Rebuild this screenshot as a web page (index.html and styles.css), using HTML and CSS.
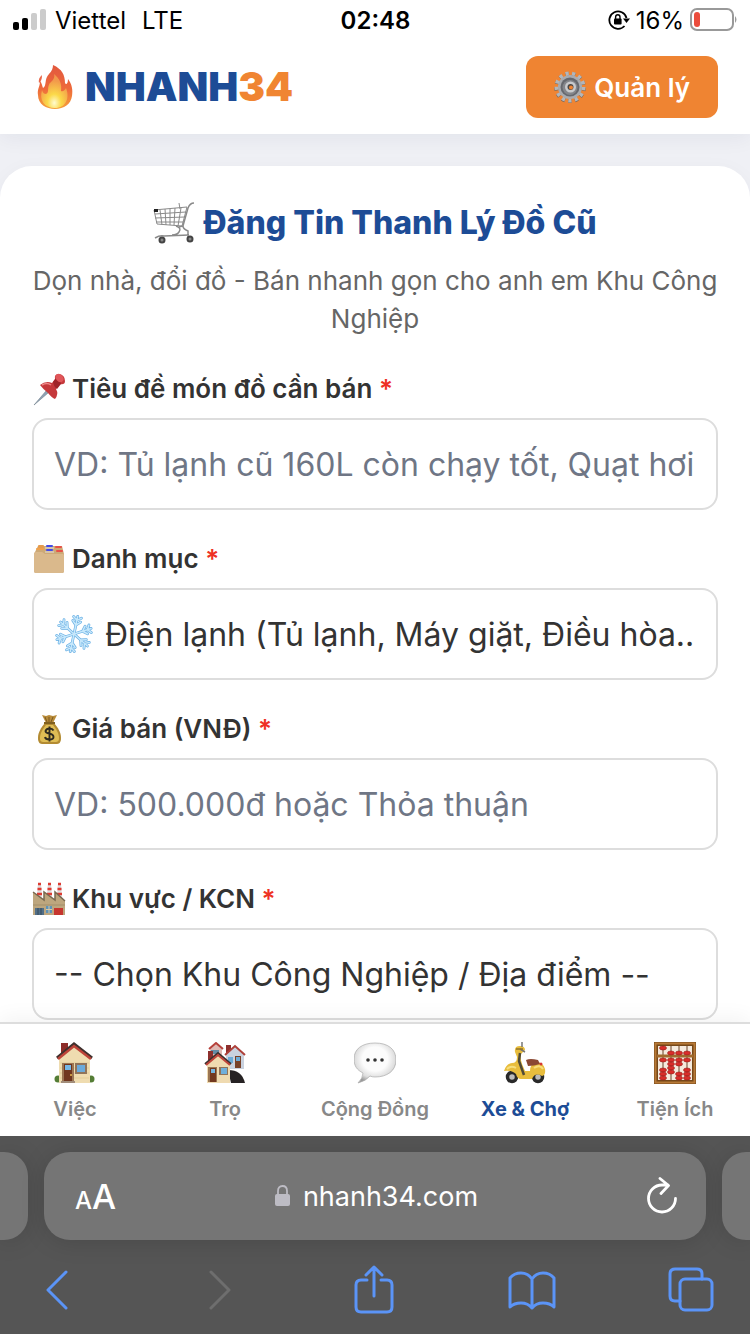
FILE: index.html
```html
<!DOCTYPE html>
<html lang="vi">
<head>
<meta charset="utf-8">
<meta name="viewport" content="width=device-width, initial-scale=1">
<title>NHANH34 - Đăng Tin Thanh Lý Đồ Cũ</title>
<link rel="stylesheet" href="styles.css">
</head>
<body>
<div class="screen">
  <div class="status">
    <div class="status-side">
      <svg width="34" height="22" viewBox="0 0 34 22" aria-hidden="true">
        <rect x="0" y="13" width="6" height="8" rx="2"/><rect x="9" y="9" width="6" height="12" rx="2"/>
        <g fill="#ccc"><rect x="18" y="4" width="6" height="17" rx="2"/><rect x="27" y="0" width="6" height="21" rx="2"/></g>
      </svg>
      <span>Viettel</span><span class="network">LTE</span>
    </div>
    <time class="clock">02:48</time>
    <div class="status-side status-right">
      <svg width="22" height="20" viewBox="0 0 22 20" aria-hidden="true">
        <path d="M18.500 8A8.700 8.700 0 1 0 16.500 16" fill="none" stroke="#000" stroke-width="1.800"/>
        <path d="M15 8.500h7l-3.500 4.500z"/><rect x="6" y="8.400" width="7.600" height="6.200" rx="1"/>
        <path d="M7.600 9V7a2.200 2.200 0 0 1 4.400 0v2" fill="none" stroke="#000" stroke-width="1.400"/>
      </svg>
      <span>16%</span>
      <svg width="48" height="24" viewBox="0 0 48 24" aria-hidden="true">
        <rect x="1" y="1" width="42" height="21" rx="6" fill="none" stroke="#999" stroke-width="2"/>
        <rect x="4" y="4" width="6" height="15" rx="3" fill="#eb4d3d"/><path d="M45 8q3 3.500 0 7z" fill="#999"/>
      </svg>
    </div>
  </div>

  <header class="header">
    <a class="brand" href="#">
      <svg width="36" height="44" viewBox="0 0 36 44" aria-hidden="true">
        <defs>
          <linearGradient id="fire" x1="0" y1="0" x2="0" y2="1"><stop offset="0" stop-color="#e2583e"/><stop offset=".55" stop-color="#ee6a3b"/><stop offset="1" stop-color="#f5a13b"/></linearGradient>
          <radialGradient id="glow" cx=".5" cy=".85" r=".65"><stop offset="0" stop-color="#fffbd0"/><stop offset=".4" stop-color="#fbd949"/><stop offset="1" stop-color="#f29a4b"/></radialGradient>
        </defs>
        <path d="M16 0C25 4 28 10 28 18c1 2 3 1 3-4 4 5 5 11 4 17-1 8-8 13-17 13S1 39 1 30c-1-6 2-8 2-14 2 2 2 5 3 7 4-2 1-9 6-14 3-3 4-6 4-9z" fill="url(#fire)"/>
        <path d="M17 9c6 5 8 10 7 17 2 1 4-1 5-3 4 10 0 20-11 20S2 35 5 25c1 3 2 4 4 4 4-1 0-8 5-12 3-3 4-5 3-8z" fill="url(#glow)"/>
        <path d="M5 10q-4 3-3 8 3-2 3-8" fill="#e9684b"/>
      </svg>
      <span class="wordmark">NHANH<span class="wordmark-accent">34</span></span>
    </a>
    <button class="manage" type="button">
      <svg width="32" height="32" viewBox="0 0 32 32" aria-hidden="true">
        <circle cx="16" cy="16.500" r="13.500" fill="none" stroke="#75675b" stroke-width="4.500" stroke-dasharray="3.200 3.325"/>
        <circle cx="16" cy="16" r="13.500" fill="none" stroke="#b4b6ba" stroke-width="4" stroke-dasharray="3.200 3.325"/>
        <circle cx="16" cy="16" r="12" fill="#a9abaf"/><circle cx="16" cy="16" r="9.500" fill="#66686e"/>
        <circle cx="16" cy="16.500" r="7.500" fill="#84868b"/><circle cx="16.500" cy="16" r="5.500" fill="#c8cacd"/>
        <circle cx="16.500" cy="16" r="3" fill="#4c4642"/><circle cx="17" cy="16.500" r="2" fill="#ef8432"/>
      </svg>
      <span>Quản lý</span>
    </button>
  </header>

  <main class="content">
    <form class="card">
      <h1 class="title">
        <svg width="42" height="42" viewBox="0 0 42 42" fill="none" stroke="#8a8a8a" stroke-width="1" aria-hidden="true">
          <path d="M1 8l33-3-5 19L4 22z"/><path d="M2 12l31-2M2 16l30-1M3 20l28 0M7 8l2 15M12 7l1 16M17 7v16M22 6l-1 17M28 6l-3 18M27 7l-1-6"/>
          <path d="M41 1q-4 0-6 5l-5 18-4 1M23 24q6 2 3 6-2 3-7 3M30 24q0 3 5 5v6M2 36q5-3 9-2l25-1" stroke-width="1.500"/>
          <rect x="1" y="7" width="4" height="3" fill="#222" stroke="none"/><g fill="#888" stroke="#444" stroke-width="2"><circle cx="9" cy="38" r="2.500"/><circle cx="37" cy="37" r="2.500"/></g>
        </svg>
        <span>Đăng Tin Thanh Lý Đồ Cũ</span>
      </h1>
      <p class="subtitle">Dọn nhà, đổi đồ - Bán nhanh gọn cho anh em Khu Công Nghiệp</p>

      <div class="field">
        <label class="label" for="item-title">
          <svg width="34" height="34" viewBox="0 0 34 34" aria-hidden="true">
            <path d="M2 33L14 19l2 2z" fill="#8fa3b5" stroke="#71808c" stroke-width=".6"/>
            <path d="M8 13q6-5 12-2l3-4q-1-5 4-5 6 1 6 7 0 4-5 3l-4 5q3 5-1 10-3-1-7-6-5-4-8-8z" fill="#c5383b"/>
            <path d="M21 10l3-4q5 1 5 6l-4 5q-3-2-4-7z" fill="#9f2429"/><ellipse cx="27.500" cy="6" rx="3.500" ry="4.500" transform="rotate(-40 27.500 6)" fill="#e0565a"/><path d="M10 13q5-3 9 0" fill="none" stroke="#e88" stroke-width="1.500"/>
          </svg>
          <span>Tiêu đề món đồ cần bán <span class="required">*</span></span>
        </label>
        <input class="control" id="item-title" type="text" placeholder="VD: Tủ lạnh cũ 160L còn chạy tốt, Quạt hơi">
      </div>

      <div class="field">
        <label class="label" for="category">
          <svg width="34" height="34" viewBox="0 0 34 34" aria-hidden="true">
            <path d="M2 12l4-8h24l2 8v17q0 2-2 2H4q-2 0-2-2z" fill="#cda976"/>
            <rect x="6" y="3" width="6" height="3" rx="1" fill="#e49a4d"/><rect x="4" y="6" width="8" height="2" rx="1" fill="#f0a04a"/>
            <path d="M13 6h9M13 10h9" stroke="#ddd"/><rect x="14" y="3" width="7" height="2" rx="1" fill="#424bea"/><rect x="14" y="7" width="7" height="2" rx="1" fill="#424bea"/>
            <rect x="23" y="4" width="7" height="2" rx="1" fill="#e85148"/><rect x="24" y="8" width="7" height="2" rx="1" fill="#e85148"/>
            <path d="M2 12q0-2 2-2h6l3 2h18q1 0 1 1v16q0 2-2 2H4q-2 0-2-2z" fill="#dab98c"/>
          </svg>
          <span>Danh mục <span class="required">*</span></span>
        </label>
        <div class="select-box">
          <svg class="select-icon" width="40" height="40" viewBox="-20 -20 40 40" fill="none" stroke-linecap="round" aria-hidden="true">
            <defs><g id="arm"><path d="M0 0V-18M0-9l-4-4M0-9l4-4M0-14l-4-3M0-14l4-3"/></g>
            <g id="flake"><use href="#arm"/><use href="#arm" transform="rotate(60)"/><use href="#arm" transform="rotate(120)"/><use href="#arm" transform="rotate(180)"/><use href="#arm" transform="rotate(240)"/><use href="#arm" transform="rotate(300)"/></g></defs>
            <g transform="rotate(12)"><use href="#flake" stroke="#68afe4" stroke-width="2.800"/><use href="#flake" stroke="#c7e8fb" stroke-width="1.500"/></g>
          </svg>
          <select class="control control-with-icon" id="category"><option>Điện lạnh (Tủ lạnh, Máy giặt, Điều hòa..</option></select>
        </div>
      </div>

      <div class="field">
        <label class="label" for="price">
          <svg width="34" height="34" viewBox="0 0 34 34" aria-hidden="true">
            <path d="M10 3l4 1 3-1 4 1 4-1-4 8h-7z" fill="#b88b39"/><path d="M13 5l2 5M17 5v5M21 5l-2 5" stroke="#7b5921"/>
            <path d="M13 11h9c4 5 7 9 7 15 0 5-2 6-5 6H11c-3 0-5-1-5-6 0-6 3-10 7-15z" fill="#b38b32"/><path d="M14 13h7c3 4 6 8 6 13 0 3-1 4-4 4H12c-3 0-4-1-4-4 0-5 3-9 6-13z" fill="#dfbd55"/>
            <path d="M12 11h11" stroke="#806020" stroke-width="2"/><path d="M21.500 18.500q-1-2-4-2t-4 2.500q0 2 4 2.700t4 3.300q0 2.500-4 2.500t-4.500-2.500M17.500 14.500v15" fill="none" stroke="#2f2b20" stroke-width="1.900"/>
          </svg>
          <span>Giá bán (VNĐ) <span class="required">*</span></span>
        </label>
        <input class="control" id="price" type="text" placeholder="VD: 500.000đ hoặc Thỏa thuận">
      </div>

      <div class="field">
        <label class="label" for="area">
          <svg width="34" height="34" viewBox="0 0 34 34" aria-hidden="true">
            <path d="M5 14l1-13h3l1 16M15 14l1-13h3l1 16M25 14l1-13h3l1 16" fill="#dedcdc"/><path d="M6 2h3M5.500 7h4M5 12h5M16 2h3M15.500 7h4M15 12h5M26 2h3M25.500 7h4M25 12h5" stroke="#dd3b32" stroke-width="2.500"/>
            <path d="M1 10l11 8v-8l11 8v-8l10 9v14H1z" fill="#bda67e"/><path d="M1 10l11 8v-8l11 8v-8l10 9" fill="none" stroke="#776850" stroke-width="1.500"/><path d="M1 23h32" stroke="#a28f6b"/>
            <path d="M3 26h9v7H3z" fill="#526f87"/><path d="M6 26v7M9 26v7" stroke="#344b5d"/><path d="M14 24h6v7h-6z" fill="#5f93b8"/><path d="M17 24v7M14 27.500h6" stroke="#d8c9a9"/><path d="M22 26h9v7h-9z" fill="#c6352e"/>
          </svg>
          <span>Khu vực / KCN <span class="required">*</span></span>
        </label>
        <select class="control" id="area"><option>-- Chọn Khu Công Nghiệp / Địa điểm --</option></select>
      </div>
    </form>
  </main>

  <nav class="tabs">
    <a class="tab" href="#">
      <svg width="42" height="42" viewBox="0 0 42 42" aria-hidden="true">
        <g fill="#547d35"><circle cx="4" cy="37" r="3.500"/><circle cx="37" cy="37" r="3.500"/></g>
        <path d="M7 1h7v11H7z" fill="#8e2d29"/><path d="M5 17L20 4l16 13v24H5z" fill="#efdcb0"/><path d="M6 21h29M6 26h29M6 31h29M6 36h29" stroke="#dfc794" stroke-width=".7"/>
        <path d="M3 16L20 2l18 14" fill="none" stroke="#3f302d" stroke-width="3"/><path d="M4 17L20 4l17 13" fill="none" stroke="#be4439" stroke-width="2.500"/>
        <path d="M8 21h12v19H8z" fill="#9c7654"/><path d="M10 22h8v18h-8z" fill="#70361f"/><path d="M11 23h6v5h-6z" fill="#76b7e6"/><circle cx="17" cy="33" r="1" fill="#e4b84f"/><path d="M7 39h14v2H7z" fill="#a28d7a"/>
        <path d="M21 21h12v11H21z" fill="#90745b"/><path d="M23 23h8v7h-8z" fill="#6caada"/>
      </svg><span>Việc</span>
    </a>
    <a class="tab" href="#">
      <svg width="42" height="42" viewBox="0 0 42 42" aria-hidden="true">
        <path d="M6 7l6-5 6 5v9H6z" fill="#dfb9b4"/><path d="M5 7l7-6 7 6" fill="none" stroke="#b6413b" stroke-width="2"/><path d="M7 8h8v4H7z" fill="#648ca6"/>
        <path d="M22 3h5v8h-5z" fill="#8e302d"/><path d="M22 13l9-9 9 9v14H22z" fill="#c9d2df"/><path d="M21 13l10-9 10 9" fill="none" stroke="#ae4039" stroke-width="2"/><path d="M31 14h6v12h-6z" fill="#784127"/><path d="M32 15h4v4h-4zM24 15h5v6h-5z" fill="#6cabd7"/>
        <path d="M24 28q14 0 17 13H27z" fill="#262223"/><path d="M4 9h5v9H4z" fill="#8e302d"/><path d="M3 21l12-9 11 9v20H3z" fill="#efdab0"/><path d="M1 22L14 11l13 11" fill="none" stroke="#3d302e" stroke-width="2"/><path d="M2 23l12-10 12 10" fill="none" stroke="#c0443a" stroke-width="2"/>
        <path d="M4 25h9v15H4z" fill="#9b7653"/><path d="M6 26h6v14H6z" fill="#72381f"/><path d="M7 27h4v4H7z" fill="#75b6e1"/><path d="M15 25h9v8h-9z" fill="#90745b"/><path d="M17 26h6v6h-6z" fill="#70afdb"/>
      </svg><span>Trọ</span>
    </a>
    <a class="tab" href="#">
      <svg width="42" height="42" viewBox="0 0 42 42" aria-hidden="true">
        <defs><radialGradient id="bubble" cx=".5" cy=".4" r=".6"><stop offset=".5" stop-color="#fcfcfc"/><stop offset=".8" stop-color="#ddd"/><stop offset="1" stop-color="#999"/></radialGradient></defs>
        <path d="M9 31C3 28 0 24 0 17 0 7 8 1 21 1s21 6 21 17-9 17-21 17q-3 0-5-1-4 5-12 7 5-5 5-10z" fill="url(#bubble)" stroke="#aaa" stroke-width=".7"/>
        <g fill="#333"><circle cx="14" cy="18" r="1.800"/><circle cx="21" cy="18" r="1.800"/><circle cx="28" cy="18" r="1.800"/></g>
      </svg><span>Cộng Đồng</span>
    </a>
    <a class="tab tab-active" href="#" aria-current="page">
      <svg width="42" height="42" viewBox="0 0 42 42" aria-hidden="true">
        <g fill="#bbb" stroke="#292929" stroke-width="3.500"><circle cx="8" cy="35" r="4.500"/><circle cx="34" cy="35" r="4.500"/></g>
        <path d="M11 10q-1-6 5-6 5 0 5 4l-4 4q-1 4 1 10l3 7h5q0-7 6-9 7 0 9 7 1 6-3 7-7-4-10 3H17q-4 0-5-5-4-4-12-3 2-7 8-8 5 0 5-6z" fill="#e8bd3d"/>
        <path d="M16 11l-1 8 5 14" fill="none" stroke="#514b37" stroke-width="2.500"/><path d="M18 5V0M16 7l5 3" stroke="#777" stroke-width="1.500"/><path d="M12 7h7" stroke="#92742b" stroke-width="1.500"/>
        <path d="M22 18q4-2 12 0l2 4q-6 2-12 2z" fill="#8b4933"/><circle cx="37" cy="22" r="1.500" fill="#d63832"/><path d="M3 27q4-4 9-1M30 26q6-4 9 1" fill="none" stroke="#f7df7d" stroke-width="2"/>
      </svg><span>Xe &amp; Chợ</span>
    </a>
    <a class="tab" href="#">
      <svg width="42" height="42" viewBox="0 0 42 42" aria-hidden="true">
        <rect x="2" y="2" width="38" height="38" fill="#f5eadd" stroke="#754819" stroke-width="4"/><rect x="1.500" y="1.500" width="39" height="39" fill="none" stroke="#b77937" stroke-width="2"/>
        <path d="M9 4v34M17 4v34M25 4v34M33 4v34" stroke="#6b4429"/><path d="M3 14h36" stroke="#a26a2d" stroke-width="3"/>
        <g fill="#d92d29" stroke="#93201d" stroke-width=".6"><ellipse cx="9" cy="6" rx="3.500" ry="2"/><ellipse cx="17" cy="11" rx="3.500" ry="2"/><ellipse cx="25" cy="11" rx="3.500" ry="2"/><ellipse cx="33" cy="11" rx="3.500" ry="2"/>
        <ellipse cx="9" cy="18" rx="3.500" ry="2"/><ellipse cx="17" cy="18" rx="3.500" ry="2"/><ellipse cx="25" cy="18" rx="3.500" ry="2"/><ellipse cx="33" cy="18" rx="3.500" ry="2"/>
        <ellipse cx="17" cy="22" rx="3.500" ry="2"/><ellipse cx="25" cy="22" rx="3.500" ry="2"/><ellipse cx="17" cy="26" rx="3.500" ry="2"/><ellipse cx="9" cy="28" rx="3.500" ry="2"/><ellipse cx="33" cy="28" rx="3.500" ry="2"/>
        <ellipse cx="17" cy="30" rx="3.500" ry="2"/><ellipse cx="9" cy="32" rx="3.500" ry="2"/><ellipse cx="25" cy="32" rx="3.500" ry="2"/><ellipse cx="33" cy="32" rx="3.500" ry="2"/><ellipse cx="9" cy="36" rx="3.500" ry="2"/><ellipse cx="25" cy="36" rx="3.500" ry="2"/><ellipse cx="33" cy="36" rx="3.500" ry="2"/></g>
      </svg><span>Tiện Ích</span>
    </a>
  </nav>

  <footer class="browser">
    <div class="address-row">
      <div class="peek peek-left"></div>
      <div class="address">
        <button class="address-button text-size" type="button" aria-label="Cỡ chữ"><span class="small-a">A</span><span>A</span></button>
        <div class="site">
          <svg width="16" height="22" viewBox="0 0 16 22" aria-hidden="true"><rect x="0" y="9" width="15" height="12" rx="2" fill="#bdbcc4"/><path d="M3 10V6q0-5 4.500-5T12 6v4" fill="none" stroke="#bdbcc4" stroke-width="1.800"/></svg>
          <span>nhanh34.com</span>
        </div>
        <button class="address-button reload" type="button" aria-label="Tải lại">
          <svg width="32" height="38" viewBox="0 0 32 38" fill="none" stroke="#fff" stroke-width="2.800" stroke-linecap="round" stroke-linejoin="round" aria-hidden="true"><path d="M29.500 21.500a13.500 13.500 0 1 1-13.500-13.500h6M14 1.500l8.500 7-7.500 8"/></svg>
        </button>
      </div>
      <div class="peek peek-right"></div>
    </div>
    <div class="toolbar">
      <button class="tool" type="button" aria-label="Quay lại"><svg width="46" height="50" viewBox="0 0 46 50"><path d="M32 7L14 25l18 18"/></svg></button>
      <button class="tool" type="button" aria-label="Tiến" disabled><svg width="46" height="50" viewBox="0 0 46 50"><path d="M19 7l18 18-18 18"/></svg></button>
      <button class="tool" type="button" aria-label="Chia sẻ"><svg width="46" height="50" viewBox="0 0 46 50"><path d="M18 15h-6q-5 0-5 5v22q0 5 5 5h26q5 0 5-5V20q0-5-5-5h-6M25 31V2M17 10l8-8 8 8"/></svg></button>
      <button class="tool" type="button" aria-label="Dấu trang"><svg width="50" height="50" viewBox="0 0 50 50"><path d="M25 14Q21 8 14 8T3 13v29q4-4 11-4t11 5q4-5 11-5t11 4V13q-4-5-11-5t-11 6v29"/></svg></button>
      <button class="tool" type="button" aria-label="Các thẻ"><svg width="46" height="50" viewBox="0 0 46 50"><rect x="12" y="14" width="32" height="31" rx="5"/><path d="M12 36H7q-5 0-5-5V9q0-5 5-5h22q5 0 5 5v5"/></svg></button>
    </div>
  </footer>
</div>
</body>
</html>
```
FILE: styles.css
```css
* { box-sizing: border-box; }

body {
  margin: 0;
  background: #fff;
  color: #333;
  font-family: Inter, "Noto Sans", sans-serif;
}

svg { display: block; flex: none; }
a { color: inherit; text-decoration: none; }
button { padding: 0; border: 0; background: none; color: inherit; font: inherit; }

.screen {
  display: flex;
  flex-direction: column;
  height: 100vh;
  overflow: hidden;
}

.status {
  position: relative;
  z-index: 2;
  display: grid;
  grid-template-columns: 1fr auto 1fr;
  align-items: center;
  height: 40px;
  padding: 0 12px 0 13px;
  background: #fff;
  color: #000;
  font-size: 24px;
}
.status-side { display: flex; align-items: center; gap: 8px; }
.status-right { justify-content: flex-end; gap: 6px; }
.network { margin-left: 8px; }
.clock { font-weight: 600; }

.header {
  position: relative;
  z-index: 1;
  display: flex;
  align-items: center;
  justify-content: space-between;
  padding: 16px 32px;
  background: #fff;
  box-shadow: 0 4px 20px rgba(20, 30, 70, .06);
}
.brand { display: flex; align-items: center; gap: 12px; padding-left: 5px; }
.wordmark { color: #1d4c96; font-size: 40px; font-weight: 900; line-height: 48px; }
.wordmark-accent { color: #f08532; }
.manage {
  display: flex;
  align-items: center;
  gap: 8px;
  height: 62px;
  padding: 0 28px;
  border-radius: 12px;
  background: #ef8432;
  color: #fff;
  font-size: 26px;
  font-weight: 600;
}

.content {
  flex: 1;
  min-height: 0;
  overflow: hidden;
  padding-top: 32px;
  background: #eff0f5;
}
.card {
  padding: 32px;
  border-radius: 32px;
  background: #fff;
  box-shadow: 0 4px 20px rgba(20, 30, 70, .04);
}
.title {
  display: flex;
  align-items: center;
  justify-content: center;
  gap: 8px;
  margin: 0 0 14px;
  color: #1d4c96;
  font-size: 32px;
  font-weight: 800;
  line-height: 50px;
}
.subtitle {
  margin: 0 0 32px;
  color: #666;
  font-size: 26px;
  line-height: 38px;
  text-align: center;
}
.field { margin-bottom: 30px; }
.label {
  display: flex;
  align-items: center;
  gap: 6px;
  margin-bottom: 10px;
  font-size: 26px;
  font-weight: 600;
  line-height: 38px;
}
.required { color: #ee3124; }
.control {
  display: block;
  width: 100%;
  height: 92px;
  padding: 0 20px;
  border: 2px solid #ddd;
  border-radius: 16px;
  outline: 0;
  appearance: none;
  background: #fff;
  color: #333;
  font: inherit;
  font-size: 32px;
}
.control::placeholder { color: #6f7685; opacity: 1; }
.select-box { display: grid; align-items: center; }
.select-box > * { grid-area: 1 / 1; }
.select-icon { z-index: 1; margin-left: 22px; pointer-events: none; }
.control-with-icon { padding-left: 71px; }

.tabs {
  position: relative;
  z-index: 1;
  display: grid;
  grid-template-columns: repeat(5, 1fr);
  height: 114px;
  border-top: 2px solid #ddd;
  background: #fff;
  box-shadow: 0 -4px 20px rgba(0, 0, 0, .05);
}
.tab {
  display: flex;
  flex-direction: column;
  align-items: center;
  gap: 12px;
  padding-top: 18px;
  color: #888;
  font-size: 20px;
  font-weight: 600;
  line-height: 26px;
}
.tab-active { color: #1d4c96; font-weight: 700; }

.browser {
  position: relative;
  z-index: 2;
  height: 198px;
  padding-top: 16px;
  background: #555;
}
.address-row { display: flex; gap: 16px; height: 88px; }
.peek, .address { background: #757575; box-shadow: 0 2px 24px rgba(0, 0, 0, .14); }
.peek { width: 28px; }
.peek-left { border-radius: 0 24px 24px 0; }
.peek-right { border-radius: 24px 0 0 24px; }
.address {
  flex: 1;
  display: grid;
  grid-template-columns: 1fr auto 1fr;
  align-items: center;
  padding: 0 28px 0 31px;
  border-radius: 26px;
  color: #fff;
  font-size: 27px;
}
.text-size { justify-self: start; font-size: 34px; font-weight: 500; }
.small-a { font-size: 24px; }
.site { display: flex; align-items: center; gap: 12px; }
.reload { justify-self: end; }
.toolbar {
  display: flex;
  align-items: center;
  justify-content: space-between;
  height: 94px;
  padding: 6px 36px 0 34px;
}
.tool {
  color: #5b94f7;
}
.tool svg {
  fill: none;
  stroke: currentColor;
  stroke-width: 3;
  stroke-linecap: round;
  stroke-linejoin: round;
}
.tool:disabled { color: #6e6e6e; }
```
